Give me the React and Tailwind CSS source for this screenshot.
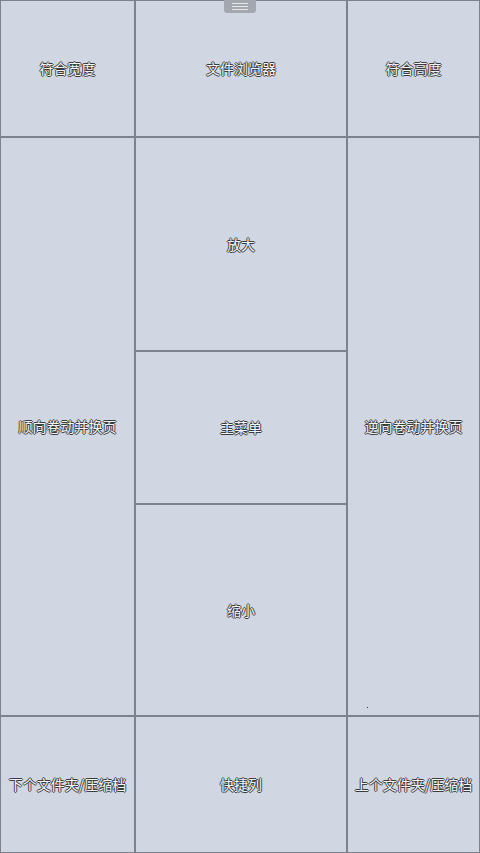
import React from 'react';

// One tap zone of the reader overlay
const Zone = ({ label, className = '' }) => (
    <div className={`flex items-center justify-center border border-[#7d828c] bg-[#d0d7e2] ${className}`}>
        <span className="text-[14px] text-[#f4f5f7] [text-shadow:1px_0_0_#3a3c40,-1px_0_0_#3a3c40,0_1px_0_#3a3c40,0_-1px_0_#3a3c40] [font-family:'Noto_Sans_CJK_SC',sans-serif]">
            {label}
        </span>
    </div>
);

const App = () => {
    return (
        <div className="relative flex h-[853px] w-[480px] flex-col bg-[#d0d7e2]">
            {/* top row */}
            <div className="flex h-[137px]">
                <Zone label="符合宽度" className="w-[135px]" />
                <Zone label="文件浏览器" className="w-[212px]" />
                <Zone label="符合高度" className="flex-1" />
            </div>

            {/* middle row */}
            <div className="flex flex-1">
                <Zone label="顺向卷动并换页" className="w-[135px]" />
                <div className="flex w-[212px] flex-col">
                    <Zone label="放大" className="h-[214px]" />
                    <Zone label="主菜单" className="h-[153px]" />
                    <Zone label="缩小" className="flex-1" />
                </div>
                <Zone label="逆向卷动并换页" className="flex-1" />
            </div>

            {/* bottom row */}
            <div className="flex h-[137px]">
                <Zone label="下个文件夹/压缩档" className="w-[135px]" />
                <Zone label="快捷列" className="w-[212px]" />
                <Zone label="上个文件夹/压缩档" className="flex-1" />
            </div>

            {/* pull-down handle */}
            <div className="absolute left-[224px] top-0 flex h-[13px] w-[32px] flex-col items-center justify-center gap-[2px] rounded-b-[3px] bg-[#a3a7b0]">
                <div className="h-px w-[16px] bg-[#e6e8ec]" />
                <div className="h-px w-[16px] bg-[#e6e8ec]" />
                <div className="h-px w-[16px] bg-[#e6e8ec]" />
            </div>

            <div className="absolute left-[367px] top-[707px] h-px w-px bg-[#333]" />
        </div>
    );
};

export default App;
